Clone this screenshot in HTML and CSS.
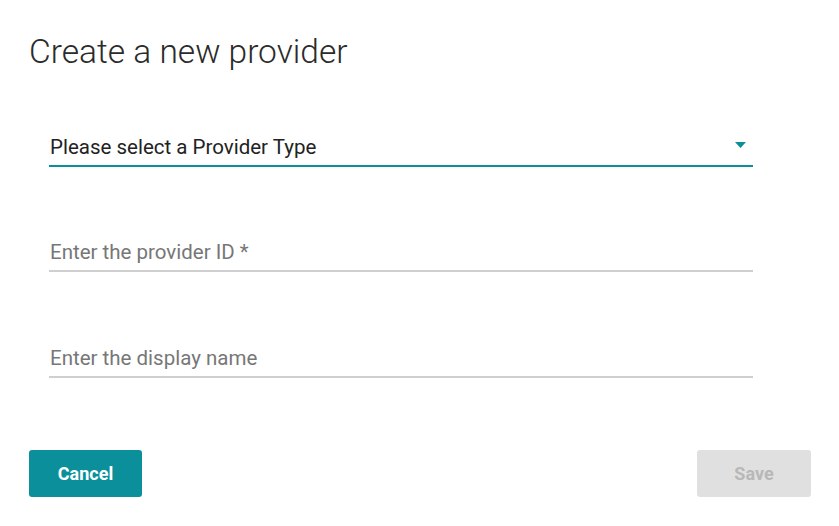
FILE: index.html
```html
<!DOCTYPE html>
<html>
<head>
<meta charset="utf-8">
<link rel="stylesheet" href="styles.css">
</head>
<body>
<div class="dialog">
  <h1 class="title">Create a new provider</h1>
  <div class="fields">
    <div class="field select">
      <span class="value">Please select a Provider Type</span>
      <svg class="arrow" width="11" height="6" viewBox="0 0 11 6"><path d="M0 0 L11 0 L5.5 6 Z" fill="#0a8f9b"/></svg>
    </div>
    <div class="field input">
      <span class="placeholder">Enter the provider ID *</span>
    </div>
    <div class="field input">
      <span class="placeholder">Enter the display name</span>
    </div>
  </div>
  <div class="actions">
    <button class="btn primary">Cancel</button>
    <button class="btn disabled">Save</button>
  </div>
</div>
</body>
</html>
```
FILE: styles.css
```css
html, body {
  margin: 0;
  padding: 0;
  background: #ffffff;
}
body {
  font-family: Roboto, "Liberation Sans", sans-serif;
}
.dialog {
  width: 782px;
  padding: 30px 0 0 29px;
  display: flex;
  flex-direction: column;
}
.title {
  margin: 0;
  font-weight: 300;
  font-size: 33.5px;
  line-height: 44px;
  color: #2b2b2b;
}
.fields {
  margin: 55px 58px 0 20px;
  display: flex;
  flex-direction: column;
}
.field {
  display: flex;
  align-items: center;
  justify-content: space-between;
  height: 38px;
  padding: 0 0 0 1px;
  box-sizing: border-box;
}
.select {
  border-bottom: 2px solid #0a8f9b;
}
.select .value {
  font-size: 20.5px;
  color: #222222;
}
.arrow {
  margin-right: 7px;
  margin-bottom: 4px;
}
.input {
  margin-top: 67px;
  border-bottom: 2px solid #cfcfcf;
}
.input + .input {
  margin-top: 68px;
}
.placeholder {
  font-size: 20.5px;
  color: #777777;
}
.actions {
  margin-top: 72px;
  display: flex;
  justify-content: space-between;
}
.btn {
  width: 113px;
  height: 47px;
  border: none;
  border-radius: 3px;
  font-family: Roboto, "Liberation Sans", sans-serif;
  font-size: 18px;
  font-weight: 700;
}
.primary {
  background: #0a8f9b;
  color: #ffffff;
}
.disabled {
  width: 114px;
  background: #e0e0e0;
  color: #b8b8b8;
}
```
